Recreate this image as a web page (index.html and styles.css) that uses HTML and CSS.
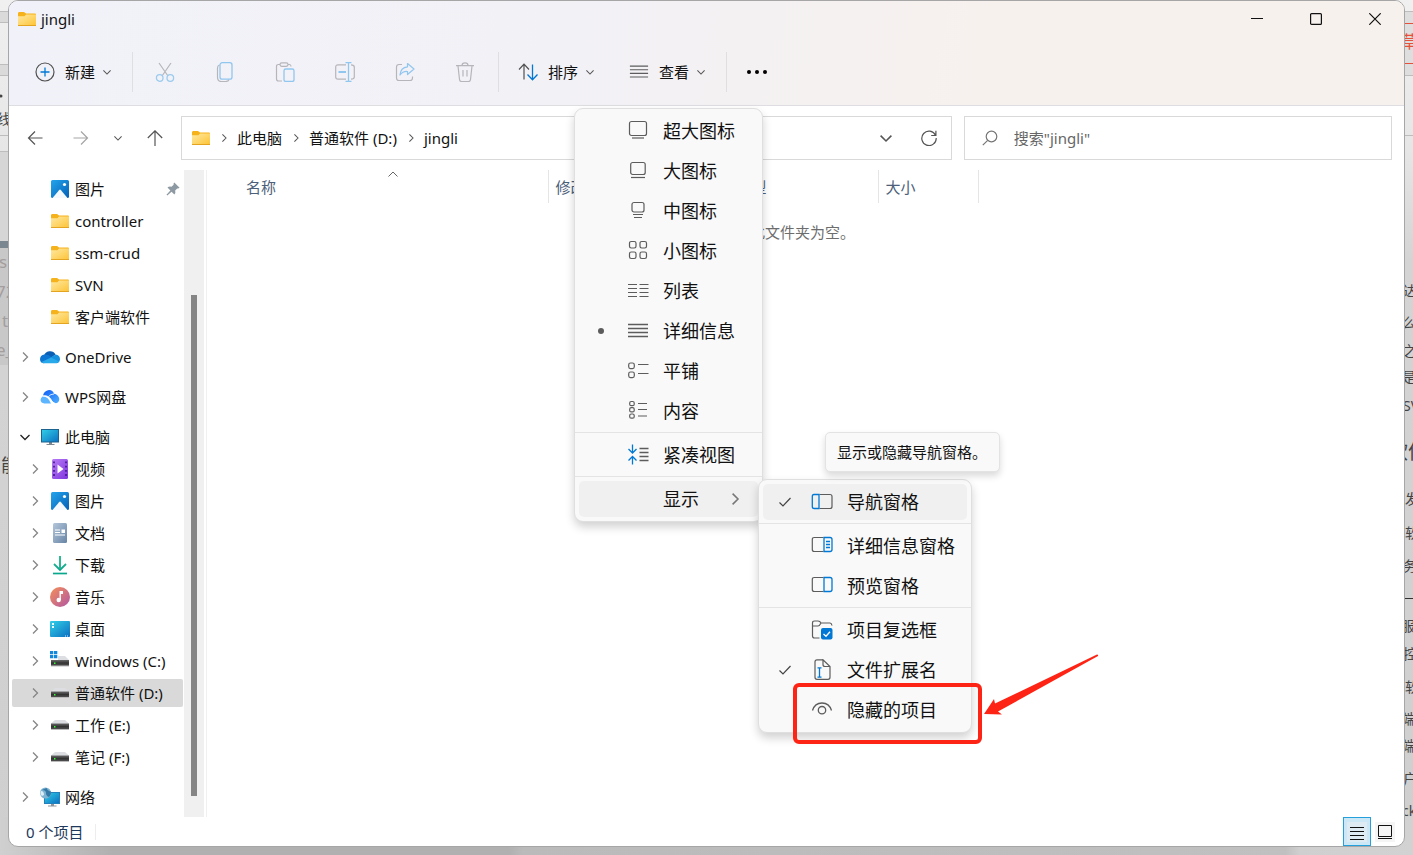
FILE: index.html
```html
<!DOCTYPE html>
<html lang="zh-CN">
<head>
<meta charset="utf-8">
<title>jingli</title>
<link rel="stylesheet" href="styles.css">
</head>
<body>
<svg class="defs" aria-hidden="true">
  <defs>
    <linearGradient id="g-folder" x1="0" y1="0" x2="1" y2="1"><stop offset="0" stop-color="#ffe9a2"/><stop offset="1" stop-color="#fdc437"/></linearGradient>
    <linearGradient id="g-blue" x1="0" y1="0" x2="1" y2="1"><stop offset="0" stop-color="#22a5ec"/><stop offset="1" stop-color="#0560b5"/></linearGradient>
    <linearGradient id="g-screen" x1="0" y1="0" x2="1" y2="1"><stop offset="0" stop-color="#31d0e8"/><stop offset="1" stop-color="#0c6fc0"/></linearGradient>
    <linearGradient id="g-video" x1="0" y1="0" x2="1" y2="1"><stop offset="0" stop-color="#b77bf6"/><stop offset="1" stop-color="#7f35dd"/></linearGradient>
    <linearGradient id="g-doc" x1="0" y1="0" x2="1" y2="1"><stop offset="0" stop-color="#b4c7da"/><stop offset="1" stop-color="#6784a6"/></linearGradient>
    <linearGradient id="g-music" x1="0" y1="0" x2="1" y2="1"><stop offset="0" stop-color="#f69057"/><stop offset="1" stop-color="#b056a4"/></linearGradient>
    <linearGradient id="g-down" x1="0" y1="0" x2="0" y2="1"><stop offset="0" stop-color="#3cc795"/><stop offset="1" stop-color="#0aa28c"/></linearGradient>
    <linearGradient id="g-wps" x1="0" y1="0" x2="1" y2="1"><stop offset="0" stop-color="#0f5df5"/><stop offset="1" stop-color="#4eb0ff"/></linearGradient>
    <linearGradient id="g-drive" x1="0" y1="0" x2="0" y2="1"><stop offset="0" stop-color="#6a6a6a"/><stop offset=".5" stop-color="#333"/><stop offset="1" stop-color="#555"/></linearGradient>
    <symbol id="folder" viewBox="0 0 20 20"><path d="M1 4.500Q1 3 2 3h5l2 1.500h9q1 0 1 1V12H1z" fill="#f5b21b"/><path d="M1 7.200h6.500L9 5.500h10V16.500H1z" fill="url(#g-folder)"/><path d="M1 16.500h18" stroke="#e5a420"/></symbol>
    <symbol id="picture" viewBox="0 0 20 20"><rect x="1" y="1" width="18" height="18" rx="1.500" fill="url(#g-blue)"/><path d="M2.500 19 9 11.200q1-1.200 2 0L17.500 19z" fill="#f4f9fd"/><circle cx="14.500" cy="5.500" r="1.600" fill="#fff"/></symbol>
    <symbol id="onedrive" viewBox="0 0 20 20"><path d="M4 9a6.200 6.200 0 0 1 11.500-1.500L11 11z" fill="#0a5fb5"/><path d="M4.500 7.500Q0 8.300 0 12.200 .2 16 4 16.300L12 10.500Q8 6.800 4.500 7.500z" fill="#0c76d2"/><path d="M10.500 10.500 15.500 7.500Q20 8.300 20 12.300q-.4 3.800-4 4z" fill="#1591e0"/><path d="M1.500 15 11 10.400 19 14.500Q18 16.300 15.500 16.300H4q-1.600-.1-2.500-1.300z" fill="#29a8ea"/></symbol>
    <symbol id="wps" viewBox="0 0 20 20"><path d="M2.500 9.500Q.5 11 .5 13q.4 3 3.800 3.500H11Q8 9 2.500 9.500z" fill="#5eb5ff"/><path d="M3 8.500Q8.500 8 11 12q2 4 5 4.300 3.300-.8 3.300-4.300Q18.500 7.500 14 6.800 12.500 2.500 8 3.200 4 4 3 8.500z" fill="url(#g-wps)"/><path d="M3 9Q8 8 10.500 12.200q1.800 4 5 4.300M8.500 9.500q2-2.500 5.500-2.500" fill="none" stroke="#fff" stroke-width=".8"/></symbol>
    <symbol id="pc" viewBox="0 0 20 20"><path d="M9 15h3v2H9zM6.500 17h8v1h-8z" fill="#7d8790"/><rect x="1.500" y="2.500" width="17" height="12.500" fill="url(#g-screen)" stroke="#1c638f"/></symbol>
    <symbol id="video" viewBox="0 0 20 20"><rect x="2" y="0" width="16" height="20" rx="1.500" fill="url(#g-video)"/><path d="M4 2.500v16M16 2.500v16" stroke="#45208d" stroke-width="1.800" stroke-dasharray="1.800 2.400"/><path d="m7.500 5.500 6 4.500-6 4.500z" fill="#fff"/></symbol>
    <symbol id="doc" viewBox="0 0 20 20"><rect x="3" y="0" width="14" height="20" rx="1.500" fill="url(#g-doc)"/><path d="M5 7h5M5 9.500h5M5 12h10" stroke="#fff" stroke-width="1.200"/><path d="M11.500 6.500H15V10h-3.500z" fill="#fff"/></symbol>
    <symbol id="download" viewBox="0 0 20 20"><path d="M10 1v13M4 9l6 6 6-6" fill="none" stroke="url(#g-down)" stroke-width="1.800"/><path d="M9.200 1h1.600v13H9.200z" fill="#27b891"/><path d="M3 18.500h14" stroke="#0aa78d" stroke-width="1.700"/></symbol>
    <symbol id="music" viewBox="0 0 20 20"><circle cx="10" cy="10" r="10" fill="url(#g-music)"/><circle cx="8.700" cy="13" r="2.200" fill="#fff"/><path d="M9.500 4h3.500v3h-2.100v6H9.500z" fill="#fff"/></symbol>
    <symbol id="desktop" viewBox="0 0 20 20"><rect y="2" width="20" height="16" rx="1" fill="url(#g-screen)"/><path d="M2 4h2v2H2zM2 7h2v2H2z" fill="#e9ffff"/><path d="M15 17h1M17 17h1" stroke="#d5efff" stroke-width="1"/></symbol>
    <symbol id="drive" viewBox="0 0 20 20"><path d="M1 8.500 5 5h10l4 3.500V9H1z" fill="#dcdee1"/><rect x="1" y="8.500" width="18" height="6" fill="url(#g-drive)"/><path d="M1 14.500h18" stroke="#bbb"/><path d="M4 11h1.500v1.500H4z" fill="#3f3"/></symbol>
    <symbol id="windrive" viewBox="0 0 20 20"><path d="M8 9V5h7l4 4z" fill="#dcdee1"/><rect x="1" y="9" width="18" height="6" fill="url(#g-drive)"/><path d="M1 15h18" stroke="#bbb"/><path d="M4 11.500h1.500V13H4z" fill="#3f3"/><path d="M0 0h3.300v3.300H0zM4 0h3.300v3.300H4zM0 4h3.300v3.300H0zM4 4h3.300v3.300H4z" fill="#1287dc"/></symbol>
    <symbol id="network" viewBox="0 0 20 20"><path d="M11 16.500h3v2h-3zM8 18.500h8.500v1H8z" fill="#8d969c"/><rect x="4.500" y="5.500" width="15" height="11" fill="url(#g-screen)" stroke="#2381bb"/><circle cx="5.500" cy="6" r="5.500" fill="#7db3d2"/><path d="M2 3Q6 3 6 6T9 10Q12 7 10.500 4 8 5 6.500 1z" fill="#3479a6"/><path d="M1 4Q4 4 4 8L2 9Q-.5 7 1 4z" fill="#dceef5"/></symbol>
    <symbol id="pin" viewBox="0 0 16 16"><path d="m9.500.5 6 6q-1 1.200-2.700.8L10.500 9.700q.8 2.800-.9 4.600L6.300 11 1.500 15.500l-1-1L5 9.700 1.700 6.400Q3.500 4.700 6.300 5.500L8.700 3.200Q8.300 1.500 9.500.5z" fill="#8e9aa3"/></symbol>
    <symbol id="chev" viewBox="0 0 10 10"><path d="m3 .5 4.500 4.500L3 9.500" fill="none" stroke="currentColor" stroke-width="1.300"/></symbol>
    <symbol id="chev-down" viewBox="0 0 10 10"><path d="M.5 3 5 7.500 9.500 3" fill="none" stroke="currentColor" stroke-width="1.300"/></symbol>
    <symbol id="check" viewBox="0 0 14 12"><path d="m1.500 6.500 3.500 3.500L12.500 2" fill="none" stroke="currentColor" stroke-width="1.200"/></symbol>
    <symbol id="lines" viewBox="0 0 22 22"><path d="M1 4.500h20M1 8.500h20M1 12.500h20M1 16.500h20" stroke="#5c5c5c" stroke-width="1.300"/></symbol>
    <symbol id="plus" viewBox="0 0 20 20"><circle cx="10" cy="10" r="9" fill="none" stroke="#505050" stroke-width="1.200"/><path d="M10 5.500v9M5.500 10h9" stroke="#0078d4" stroke-width="1.300"/></symbol>
    <symbol id="cut" viewBox="0 0 20 20"><path d="m4 1 9 13M16 1 7 14" stroke="#b5b5ba" stroke-width="1.200"/><circle cx="4.700" cy="16" r="3.300" fill="none" stroke="#9ccbee" stroke-width="1.300"/><circle cx="15.300" cy="16" r="3.300" fill="none" stroke="#9ccbee" stroke-width="1.300"/></symbol>
    <symbol id="copy" viewBox="0 0 20 20"><path d="M4.500 3Q2.500 3.500 2.500 6v9q0 4.500 4 4.500h4q3 0 3.500-2" fill="none" stroke="#b5b5ba" stroke-width="1.200"/><rect x="5" y=".7" width="12" height="16.500" rx="2.200" fill="none" stroke="#91c6ef" stroke-width="1.300"/></symbol>
    <symbol id="paste" viewBox="0 0 20 20"><path d="M7 19H3.500Q1.500 19 1.500 17V4.500Q1.500 2.500 3.500 2.500H5M13 2.500h1.500q1.500 0 1.500 2" fill="none" stroke="#b5b5ba" stroke-width="1.200"/><rect x="5" y=".8" width="8" height="3.500" rx="1.700" fill="none" stroke="#b5b5ba" stroke-width="1.200"/><rect x="9" y="7" width="10" height="12.500" rx="1.800" fill="none" stroke="#91c6ef" stroke-width="1.300"/></symbol>
    <symbol id="rename" viewBox="0 0 20 20"><path d="M11 2.800H3Q.7 2.800.7 5v10q0 2.200 2.300 2.200h8M16 2.800q3.300 0 3.300 2.200v10q0 2.200-3.300 2.200" fill="none" stroke="#b5b5ba" stroke-width="1.200"/><path d="M13.500 1v18.500M10.500.7h6M10.500 19.300h6" stroke="#91c6ef" stroke-width="1.300"/><path d="M3.500 10h7.500" stroke="#91c6ef" stroke-width="2"/></symbol>
    <symbol id="share" viewBox="0 0 20 20"><path d="M7 2.500H4Q1.500 2.500 1.500 5v11q0 2.500 2.500 2.500h11q2.500 0 2.500-2.500v-1.500" fill="none" stroke="#b5b5ba" stroke-width="1.200"/><path d="M12.500 1.500 19 7l-6.500 5.500V9.500Q8 9 5 13 5.500 5.500 12.500 4.800z" fill="none" stroke="#91c6ef" stroke-width="1.200" stroke-linejoin="round"/></symbol>
    <symbol id="trash" viewBox="0 0 20 20"><path d="M1 3.700h18M7 3.500Q7 .8 10 .8t3 2.700M3 4l1.500 13.500q.2 2 2 2h7q1.800 0 2-2L17 4M8 8v6.500M12 8v6.500" fill="none" stroke="#b5b5ba" stroke-width="1.200"/></symbol>
    <symbol id="sort" viewBox="0 0 20 20"><path d="M6 17.500V2.500M1 7.500l5-5.300 5 5.300" fill="none" stroke="#505050" stroke-width="1.200"/><path d="M14.500 2.500v15M9.500 12.500l5 5.300 5-5.300" fill="none" stroke="#0078d4" stroke-width="1.300"/></symbol>
    <symbol id="v-xl" viewBox="0 0 22 22"><rect x="2.500" y="1.500" width="17" height="14" rx="2" fill="none" stroke="#5c5c5c" stroke-width="1.200"/><path d="M5 18h12" stroke="#5c5c5c" stroke-width="1.200"/></symbol>
    <symbol id="v-l" viewBox="0 0 22 22"><rect x="3.700" y="2.500" width="14.500" height="12" rx="2" fill="none" stroke="#5c5c5c" stroke-width="1.200"/><path d="M4 17.500h14" stroke="#5c5c5c" stroke-width="1.200"/></symbol>
    <symbol id="v-m" viewBox="0 0 22 22"><rect x="5" y="2.500" width="12" height="9.500" rx="2" fill="none" stroke="#5c5c5c" stroke-width="1.200"/><path d="M6 14.500h10M7 17.500h8" stroke="#5c5c5c" stroke-width="1.200"/></symbol>
    <symbol id="v-s" viewBox="0 0 22 22"><g fill="none" stroke="#5c5c5c" stroke-width="1.200"><rect x="2.500" y="1.500" width="6.500" height="6.500" rx="1.700"/><rect x="13" y="1.500" width="6.500" height="6.500" rx="1.700"/><rect x="2.500" y="12" width="6.500" height="6.500" rx="1.700"/><rect x="13" y="12" width="6.500" height="6.500" rx="1.700"/></g></symbol>
    <symbol id="v-list" viewBox="0 0 22 22"><path d="M1 4.500h9M12.500 4.500h9M1 8.500h9M12.500 8.500h9M1 12.500h9M12.500 12.500h9M1 16.500h9M12.500 16.500h9" stroke="#5c5c5c" stroke-width="1.200"/></symbol>
    <symbol id="v-tile" viewBox="0 0 22 22"><g fill="none" stroke="#5c5c5c" stroke-width="1.200"><rect x="1.700" y="3" width="5.600" height="5.600" rx="1.800"/><rect x="1.700" y="12" width="5.600" height="5.600" rx="1.800"/><path d="M11 4.500h10.500M11 13.500h10.500"/></g></symbol>
    <symbol id="v-content" viewBox="0 0 22 22"><g fill="none" stroke="#5c5c5c" stroke-width="1.200"><rect x="2.700" y="1.500" width="4.500" height="4.200" rx="1.500"/><rect x="2.700" y="7.700" width="4.500" height="4.200" rx="1.500"/><rect x="2.700" y="14" width="4.500" height="4.200" rx="1.500"/><path d="M11 3.500h9M11 9.500h9M11 16h9"/></g></symbol>
    <symbol id="v-compact" viewBox="0 0 22 22"><path d="M5.500.5v8M1.500 5l4 4 4-4M5.500 20.500v-7M1.500 16.500l4-4 4 4" fill="none" stroke="#0078d4" stroke-width="1.300"/><path d="M12.500 4.500h9M12.500 8.500h9M12.500 12.500h9M12.500 16.500h9" stroke="#5c5c5c" stroke-width="1.300"/></symbol>
    <symbol id="p-nav" viewBox="0 0 22 22"><path d="M8.500 3.500H19q2 0 2 2v10q0 2-2 2H8.500" fill="none" stroke="#5c5c5c" stroke-width="1.200"/><path d="M8 3.500H3q-1.700 0-1.700 2v10q0 2 1.700 2h5z" fill="none" stroke="#0078d4" stroke-width="1.300"/></symbol>
    <symbol id="p-prev" viewBox="0 0 22 22"><path d="M12.500 2.500H3.300q-2 0-2 2v10q0 2 2 2h9.200" fill="none" stroke="#5c5c5c" stroke-width="1.200"/><path d="M13 2.500h6q2 0 2 2v10q0 2-2 2h-6z" fill="none" stroke="#0078d4" stroke-width="1.300"/></symbol>
    <symbol id="p-detail" viewBox="0 0 22 22"><use href="#p-prev"/><path d="M15 6.500h4M15 9.500h4M15 12.500h4" stroke="#0078d4" stroke-width="1.300"/></symbol>
    <symbol id="p-check" viewBox="0 0 22 22"><path d="M8.500 19H3.500q-2 0-2-2V4q0-2 2-2H7q2 0 3 2h9q1.500 0 2 2.500M1.500 7H7q1.500 0 3-3" fill="none" stroke="#5c5c5c" stroke-width="1.200"/><rect x="10" y="9" width="11.500" height="11.500" rx="2" fill="#0078d4"/><path d="m12.500 15 2.500 2.300 4-4.500" fill="none" stroke="#fff" stroke-width="1.300"/></symbol>
    <symbol id="p-ext" viewBox="0 0 22 22"><path d="M12 .8H6q-2 0-2 2v15.500q0 2 2 2h11q2 0 2-2V7.500L12 .8V5.500q0 2 2 2h5" fill="none" stroke="#5c5c5c" stroke-width="1.200"/><path d="M8.500 9v9M6.500 8.800h4M6.500 18.200h4" stroke="#0078d4" stroke-width="1.300"/></symbol>
    <symbol id="p-eye" viewBox="0 0 22 22"><path d="M1.500 11.500C4.500 1.500 17.500 1.500 20.500 11.500" fill="none" stroke="#5c5c5c" stroke-width="1.300"/><circle cx="11" cy="11.200" r="3.700" fill="none" stroke="#5c5c5c" stroke-width="1.300"/></symbol>
  </defs>
</svg>

<svg class="behind behind-left" width="9" height="500" aria-hidden="true">
  <path d="M0 11.500h9M0 22.500h9M0 64.500h9M0 75.500h9M0 135.500h9M0 151.500h9" stroke="#bdbdbd"/>
  <path d="M0 12h9v10H0zM0 65h9v10H0z" fill="#dadada"/>
  <path d="M0 152h9v88H0z" fill="#d6d6d6"/>
  <path d="M0 241h9v7H0z" fill="#7b8790"/>
  <path d="M0 248h9v117H0z" fill="#c8c8c8"/>
  <circle cx="1" cy="96" r="1.500" fill="#444"/>
  <text class="dark" x="-3" y="124" font-size="14">线</text>
  <g class="faint" font-size="17"><text x="-1" y="268">s</text><text x="-4" y="298">72</text><text x="2" y="327">ty</text><text x="-4" y="356">e_</text></g>
  <text class="dark" x="1" y="472" font-size="18">能</text>
</svg>
<svg class="behind behind-right" width="9" height="820" aria-hidden="true">
  <path d="M0 11.500h9M0 75.500h9M0 135.500h9" stroke="#bdbdbd"/>
  <path d="M0 12h9v63H0z" fill="#dedede"/>
  <path d="M0 23.500h9M0 63.500h9" stroke="#e8503a"/>
  <text x="-3" y="48" font-size="17" fill="#e8503a">草</text>
  <g class="dark" font-size="14"><text x="-1" y="296">达</text><text x="-2" y="328">么</text><text x="-2" y="356">之</text><text x="-2" y="382">是</text><text x="-1" y="411">SV</text><text x="1" y="504">发</text><text x="1" y="538">软</text><text x="-1" y="571">务</text><text x="-3" y="631">服</text><text x="-1" y="659">控</text><text x="1" y="692">软</text><text x="-2" y="724">端</text><text x="-2" y="751">端</text><text x="-1" y="784">户</text><text x="-2" y="816">ck</text></g>
  <text class="dark" x="-16" y="459" font-size="20">软件</text>
  <path d="M0 598.500h9" stroke="#333"/>
</svg>
<div class="taskline"></div>

<main class="window">
  <header class="head">
    <div class="titlebar">
      <svg class="i20"><use href="#folder"/></svg>
      <h1>jingli</h1>
      <div class="caption">
        <button aria-label="最小化"><svg viewBox="0 0 12 12"><path d="M0 5.500h12" stroke="#111"/></svg></button>
        <button aria-label="最大化"><svg viewBox="0 0 12 12"><rect x=".6" y=".6" width="10.800" height="10.800" rx="1" fill="none" stroke="#111" stroke-width="1.200"/></svg></button>
        <button aria-label="关闭"><svg viewBox="0 0 12 12"><path d="m.3.3 11.400 11.400M11.700.3.3 11.700" stroke="#111" stroke-width="1.200"/></svg></button>
      </div>
    </div>
    <div class="toolbar">
      <button class="tool"><svg class="i20"><use href="#plus"/></svg><span>新建</span><svg class="i8"><use href="#chev-down"/></svg></button>
      <i class="vsep"></i>
      <button class="cmd" aria-label="剪切"><svg class="i20"><use href="#cut"/></svg></button>
      <button class="cmd" aria-label="复制"><svg class="i20"><use href="#copy"/></svg></button>
      <button class="cmd" aria-label="粘贴"><svg class="i20"><use href="#paste"/></svg></button>
      <button class="cmd" aria-label="重命名"><svg class="i20"><use href="#rename"/></svg></button>
      <button class="cmd" aria-label="共享"><svg class="i20"><use href="#share"/></svg></button>
      <button class="cmd" aria-label="删除"><svg class="i20"><use href="#trash"/></svg></button>
      <i class="vsep"></i>
      <button class="tool"><svg class="i20"><use href="#sort"/></svg><span>排序</span><svg class="i8"><use href="#chev-down"/></svg></button>
      <button class="tool"><svg class="i20"><use href="#lines"/></svg><span>查看</span><svg class="i8"><use href="#chev-down"/></svg></button>
      <i class="vsep"></i>
      <button class="tool" aria-label="更多"><svg class="dots" viewBox="0 0 22 6"><circle cx="3" cy="3" r="2"/><circle cx="11" cy="3" r="2"/><circle cx="19" cy="3" r="2"/></svg></button>
    </div>
  </header>

  <div class="navrow">
    <nav class="history">
      <button class="wide" aria-label="后退"><svg class="i16" viewBox="0 0 16 16"><path d="M15.500 8H1.500M8 1.500 1.500 8 8 14.500" fill="none" stroke="#555" stroke-width="1.200"/></svg></button>
      <button class="wide" aria-label="前进"><svg class="i16" viewBox="0 0 16 16"><path d="M.5 8h14M8 1.500 14.500 8 8 14.500" fill="none" stroke="#a5a5a5" stroke-width="1.200"/></svg></button>
      <button class="slim" aria-label="最近"><svg class="i8"><use href="#chev-down"/></svg></button>
      <button class="wide" aria-label="上移"><svg class="i16" viewBox="0 0 16 16"><path d="M8 16V.8M.8 8 8 .8 15.200 8" fill="none" stroke="#555" stroke-width="1.200"/></svg></button>
    </nav>
    <div class="address">
      <svg class="i20"><use href="#folder"/></svg>
      <svg class="i8 crumb"><use href="#chev"/></svg><a href="#pc">此电脑</a>
      <svg class="i8 crumb"><use href="#chev"/></svg><a href="#d">普通软件 (D:)</a>
      <svg class="i8 crumb"><use href="#chev"/></svg><a href="#jingli">jingli</a>
      <button class="drop" aria-label="历史记录"><svg class="i12"><use href="#chev-down"/></svg></button>
      <button class="refresh" aria-label="刷新"><svg class="i16" viewBox="0 0 16 16"><path d="M14.500 5.200A7.200 7.200 0 1 0 15.200 8M14.900.8v4.700h-4.700" fill="none" stroke="#555" stroke-width="1.200"/></svg></button>
    </div>
    <label class="search">
      <svg class="i16" viewBox="0 0 16 16"><circle cx="9.500" cy="6.500" r="5.300" fill="none" stroke="#777" stroke-width="1.200"/><path d="M5.700 10.300.8 15.200" stroke="#777" stroke-width="1.200"/></svg>
      <input type="text" placeholder='搜索"jingli"' aria-label="搜索">
    </label>
  </div>

  <div class="body">
    <nav class="tree">
      <a class="leaf" href="#a"><i class="i10"></i><svg class="i20"><use href="#picture"/></svg>图片<svg class="pin"><use href="#pin"/></svg></a>
      <a class="leaf" href="#a"><i class="i10"></i><svg class="i20"><use href="#folder"/></svg>controller</a>
      <a class="leaf" href="#a"><i class="i10"></i><svg class="i20"><use href="#folder"/></svg>ssm-crud</a>
      <a class="leaf" href="#a"><i class="i10"></i><svg class="i20"><use href="#folder"/></svg>SVN</a>
      <a class="leaf" href="#a"><i class="i10"></i><svg class="i20"><use href="#folder"/></svg>客户端软件</a>
      <a class="root" href="#a"><svg class="i10"><use href="#chev"/></svg><svg class="i20"><use href="#onedrive"/></svg>OneDrive</a>
      <a class="root" href="#a"><svg class="i10"><use href="#chev"/></svg><svg class="i20"><use href="#wps"/></svg>WPS网盘</a>
      <a class="root" href="#a"><svg class="i10 open"><use href="#chev-down"/></svg><svg class="i20"><use href="#pc"/></svg>此电脑</a>
      <a class="leaf" href="#a"><svg class="i10"><use href="#chev"/></svg><svg class="i20"><use href="#video"/></svg>视频</a>
      <a class="leaf" href="#a"><svg class="i10"><use href="#chev"/></svg><svg class="i20"><use href="#picture"/></svg>图片</a>
      <a class="leaf" href="#a"><svg class="i10"><use href="#chev"/></svg><svg class="i20"><use href="#doc"/></svg>文档</a>
      <a class="leaf" href="#a"><svg class="i10"><use href="#chev"/></svg><svg class="i20"><use href="#download"/></svg>下载</a>
      <a class="leaf" href="#a"><svg class="i10"><use href="#chev"/></svg><svg class="i20"><use href="#music"/></svg>音乐</a>
      <a class="leaf" href="#a"><svg class="i10"><use href="#chev"/></svg><svg class="i20"><use href="#desktop"/></svg>桌面</a>
      <a class="leaf" href="#a"><svg class="i10"><use href="#chev"/></svg><svg class="i20"><use href="#windrive"/></svg>Windows (C:)</a>
      <a class="leaf current" href="#a"><svg class="i10"><use href="#chev"/></svg><svg class="i20"><use href="#drive"/></svg>普通软件 (D:)</a>
      <a class="leaf" href="#a"><svg class="i10"><use href="#chev"/></svg><svg class="i20"><use href="#drive"/></svg>工作 (E:)</a>
      <a class="leaf" href="#a"><svg class="i10"><use href="#chev"/></svg><svg class="i20"><use href="#drive"/></svg>笔记 (F:)</a>
      <a class="root" href="#a"><svg class="i10"><use href="#chev"/></svg><svg class="i20"><use href="#network"/></svg>网络</a>
    </nav>
    <div class="scroll"><div class="thumb"></div></div>
    <section class="files">
      <table>
        <thead><tr><th class="c-name">名称<svg class="caret" viewBox="0 0 10 6"><path d="M.5 5.500 5 1l4.500 4.500" fill="none" stroke="#666"/></svg></th><th class="c-date">修改日期</th><th class="c-type">类型</th><th class="c-size">大小</th><th></th></tr></thead>
        <tbody><tr><td colspan="5">此文件夹为空。</td></tr></tbody>
      </table>
    </section>
  </div>

  <footer class="status">
    <span class="count">0 个项目</span>
    <button class="mode on" aria-label="详细信息"><svg viewBox="0 0 20 20"><path d="M3 5.500h14M3 9.500h14M3 13.500h14M3 17.500h14" stroke="#111"/></svg></button>
    <button class="mode" aria-label="大图标"><svg viewBox="0 0 20 20"><path d="M3.500 3.500h13v11h-13zM3 16.500h14" fill="none" stroke="#111"/></svg></button>
  </footer>
</main>

<div class="menu menu-view" role="menu">
  <button class="item"><i></i><svg><use href="#v-xl"/></svg>超大图标</button>
  <button class="item"><i></i><svg><use href="#v-l"/></svg>大图标</button>
  <button class="item"><i></i><svg><use href="#v-m"/></svg>中图标</button>
  <button class="item"><i></i><svg><use href="#v-s"/></svg>小图标</button>
  <button class="item"><i></i><svg><use href="#v-list"/></svg>列表</button>
  <button class="item"><i class="bullet"></i><svg><use href="#lines"/></svg>详细信息</button>
  <button class="item"><i></i><svg><use href="#v-tile"/></svg>平铺</button>
  <button class="item"><i></i><svg><use href="#v-content"/></svg>内容</button>
  <hr>
  <button class="item"><i></i><svg><use href="#v-compact"/></svg>紧凑视图</button>
  <hr>
  <button class="item hot"><i></i><svg></svg>显示<svg class="more"><use href="#chev"/></svg></button>
</div>

<div class="menu menu-show" role="menu">
  <button class="item hot"><i><svg><use href="#check"/></svg></i><svg><use href="#p-nav"/></svg>导航窗格</button>
  <hr>
  <button class="item"><i></i><svg><use href="#p-detail"/></svg>详细信息窗格</button>
  <button class="item"><i></i><svg><use href="#p-prev"/></svg>预览窗格</button>
  <hr>
  <button class="item"><i></i><svg><use href="#p-check"/></svg>项目复选框</button>
  <button class="item"><i><svg><use href="#check"/></svg></i><svg><use href="#p-ext"/></svg>文件扩展名</button>
  <button class="item"><i></i><svg><use href="#p-eye"/></svg>隐藏的项目</button>
</div>

<div class="tip" role="tooltip">显示或隐藏导航窗格。</div>

<div class="mark-box"></div>
<svg class="mark-arrow" viewBox="0 0 116 64" aria-hidden="true"><path d="M0 60 10 45l1 4.500L113 .5q1.500 0 1 1.500L14 57.500l4 3z" fill="#fe2415"/></svg>
</body>
</html>
```
FILE: styles.css
```css
* { box-sizing: border-box; }

body {
  margin: 0;
  height: 100vh;
  overflow: hidden;
  position: relative;
  background: linear-gradient(#f0f0f0 0, #e6e6e6 150px, #d4d4d4 260px, #cfcfcf 100%);
  font: 15px/20px "Noto Sans", "Noto Sans CJK SC", sans-serif;
  color: #111;
}

button {
  border: 0;
  padding: 0;
  background: none;
  font: inherit;
  color: inherit;
}

a { color: inherit; text-decoration: none; }
svg { display: block; flex: none; }

.defs { position: absolute; width: 0; height: 0; }
.i8 { width: 8px; height: 8px; color: #555; }
.i10 { width: 10px; height: 10px; flex: none; color: #858585; }
.i10.open { color: #222; }
.i12 { width: 12px; height: 12px; color: #555; }
.i16 { width: 16px; height: 16px; }
.i20 { width: 20px; height: 20px; }

/* Page visible around the window */
.behind { position: absolute; top: 0; overflow: hidden; }
.behind-left { left: 0; }
.behind-right { right: 0; }
.behind .dark { fill: #444; }
.behind .faint { fill: #a39d9d; }
.taskline {
  position: absolute;
  inset: auto 0 0 0;
  height: 38px;
  background: linear-gradient(90deg, #d0d0d0 0, #b0b0b0 8%, #b0b0b0 36%, #bababa 37%, #c0c0c0 91%, #cfcfcf 92%, #d2d2d2 100%);
}

/* Window */
.window {
  position: absolute;
  inset: 0 8px 8px 8px;
  display: flex;
  flex-direction: column;
  overflow: hidden;
  background: #fff;
  border: 1px solid #a6a6a6;
  border-radius: 10px;
}

.head {
  background: linear-gradient(100deg, #f1f2f9 0, #f2f1f6 40%, #f7f1ed 72%, #f7f1ed 100%);
  border-bottom: 1px solid #dedde1;
}

.titlebar {
  display: flex;
  align-items: center;
  height: 36px;
  padding-left: 8px;
}
.titlebar h1 { margin: 0 0 0 4px; font-size: 15px; font-weight: 400; }
.caption { display: flex; margin-left: auto; }
.caption button { width: 59px; height: 36px; display: grid; place-items: center; }
.caption svg { width: 12px; height: 12px; }

.toolbar { display: flex; align-items: center; height: 68px; padding: 2px 0 0 9px; }
.tool { display: flex; align-items: center; padding: 0 18px 0 17px; height: 40px; }
.tool span { margin: 0 8px 0 10px; }
.cmd { width: 60px; height: 40px; display: grid; place-items: center; }
.vsep { width: 1px; height: 40px; margin: 0 2px 0 3px; background: #dfdfe3; }
.dots { width: 22px; height: 6px; }

.navrow {
  display: grid;
  grid-template-columns: auto minmax(0, 9fr) minmax(0, 5fr);
  gap: 12px;
  padding: 10px 12px 10px 3px;
}
.history { display: flex; align-items: center; margin-right: -9px; }
.history .wide { width: 46px; display: grid; place-items: center; }
.history .slim { width: 28px; display: grid; place-items: center; }

.address, .search {
  display: flex;
  align-items: center;
  height: 44px;
  border: 1px solid #d9d9d9;
}
.address { padding: 0 14px 0 9px; }
.search { padding: 0 17px; gap: 16px; }
.crumb { margin: 0 9px; }
.address a { margin-right: 1px; }
.address .drop { margin-left: auto; }
.address .refresh { margin-left: 29px; }
.search input {
  flex: 1;
  min-width: 0;
  border: 0;
  padding: 0;
  outline: 0;
  background: none;
  font: inherit;
}
.search input::placeholder { color: #666; opacity: 1; }

.body { flex: 1; display: flex; min-height: 0; }

.tree { width: 175px; padding: 3px 1px 0 3px; overflow: hidden; flex: none; }
.tree a {
  display: flex;
  align-items: center;
  gap: 5px;
  height: 28px;
  margin: 4px 0;
  border-radius: 2px;
  white-space: nowrap;
}
.tree .leaf { padding-left: 18px; }
.tree .root { padding-left: 8px; margin-top: 12px; }
.tree a .i20 { margin-left: 5px; }
.tree a:first-child { margin-top: 2px; }
.tree .current { background: #d9d9d9; }
.pin { width: 14px; height: 14px; margin: 0 3px 0 auto; }

.scroll { width: 20px; background: #f0f0f0; padding: 125px 7px 21px; flex: none; }
.thumb { height: 100%; background: #858585; }

.files { flex: 1; margin-left: 2px; border-left: 1px solid #f0f0f0; }
.files table { width: 100%; table-layout: fixed; border-collapse: collapse; }
.files th {
  position: relative;
  height: 33px;
  padding: 0 7px;
  border-right: 1px solid #e5e5e5;
  text-align: left;
  font-weight: 400;
  color: #4c607a;
}
.files th:last-child { border-right: 0; }
.files .c-name { width: 341px; padding-left: 39px; }
.files .c-date { width: 181px; }
.files .c-type { width: 149px; }
.files .c-size { width: 100px; }
.files .caret { position: absolute; left: 181px; top: 1px; width: 10px; height: 6px; }
.files td { padding: 19px 6px 0 0; text-align: center; color: #6d6d6d; }

.status { display: flex; height: 29px; padding: 0 5px 0 17px; align-items: center; }
.count { margin-right: auto; padding-right: 12px; border-right: 1px solid #ededed; color: #1e395b; line-height: 16px; }
.mode { width: 28px; height: 29px; display: grid; place-items: center; }
.mode svg { width: 20px; height: 20px; background: #f5f5f5; }
.mode.on { background: #cce8f7; border: 1px solid #26a0da; }
.mode.on svg { background: #dfebf3; }

/* Menus over the window */
.menu {
  position: absolute;
  padding: 2px 0 0;
  background: #f9f9f9;
  border: 1px solid #dfdfdf;
  border-radius: 9px;
  box-shadow: 0 5px 10px rgba(0, 0, 0, .18);
  font-size: 18px;
  line-height: 26px;
}
.menu-view { left: 574px; top: 108px; width: 189px; }
.menu-show { left: 758px; top: 479px; width: 214px; }
.item {
  display: flex;
  align-items: center;
  width: calc(100% - 8px);
  height: 36px;
  margin: 2px 4px 4px;
  padding-left: 12px;
  border-radius: 5px;
  white-space: nowrap;
}
.item > i { width: 20px; height: 20px; margin-right: 16px; display: grid; place-items: center; color: #444; }
.item > i svg { width: 14px; height: 12px; }
.item > svg { width: 22px; height: 22px; margin-right: 14px; }
.item > .more { width: 12px; height: 12px; margin: 0 17px 0 auto; color: #777; }
.item > .bullet::before { content: ""; width: 6px; height: 6px; border-radius: 50%; background: #5c5c5c; }
.item.hot { background: #f0f0f0; }
.menu hr { height: 1px; margin: -1px 0 0; border: 0; background: #e4e4e4; }

.tip {
  position: absolute;
  left: 825px;
  top: 432px;
  padding: 9px 12px 9px 11px;
  background: #f9f9f9;
  border: 1px solid #e3e3e3;
  border-radius: 5px;
  box-shadow: 0 4px 7px rgba(0, 0, 0, .15);
}

/* Annotation */
.mark-box {
  position: absolute;
  left: 793px;
  top: 683px;
  width: 189px;
  height: 61px;
  border: 4px solid #fe2415;
  border-radius: 6px;
}
.mark-arrow { position: absolute; left: 984px; top: 654px; width: 116px; height: 64px; }

.menu hr + .item { margin-top: 4px; }
```
